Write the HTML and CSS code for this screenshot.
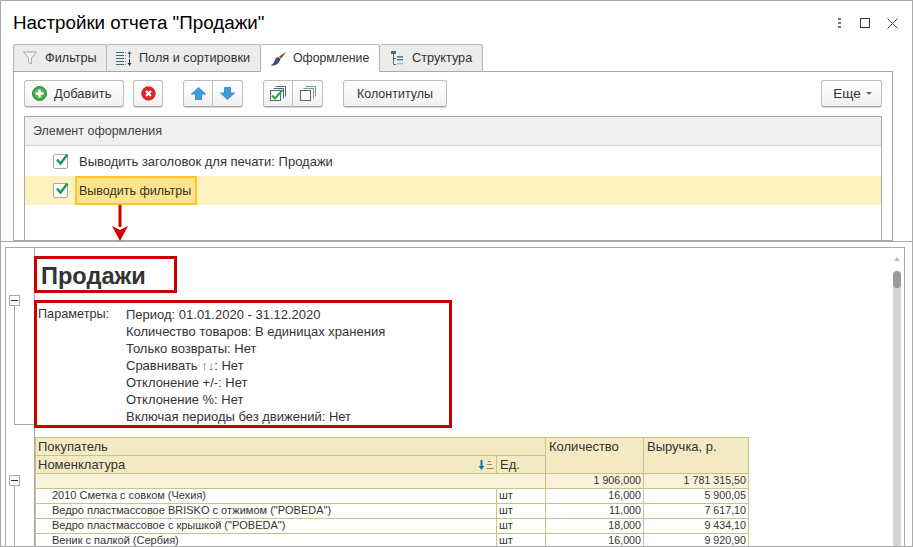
FILE: index.html
```html
<!DOCTYPE html>
<html lang="ru">
<head>
<meta charset="utf-8">
<title>Настройки отчета "Продажи"</title>
<link rel="stylesheet" href="styles.css">
</head>
<body>
<div class="page">
  <section class="settings">
    <header class="titlebar">
      <h1 class="title">Настройки отчета "Продажи"</h1>
      <div class="win-icons">
        <svg class="win-icon" width="6" height="12" viewBox="0 0 6 12"><g fill="#777"><rect x="1" y="1" width="3" height="2"/><rect x="1" y="5" width="3" height="2"/><rect x="1" y="9" width="3" height="2"/></g></svg>
        <svg class="win-icon" width="10" height="10" viewBox="0 0 10 10"><rect x=".5" y=".5" width="9" height="9" fill="none" stroke="#333"/></svg>
        <svg class="win-icon" width="11" height="11" viewBox="0 0 11 11"><path d="M.5.5l10 10M10.5.5l-10 10" stroke="#444" fill="none"/></svg>
      </div>
    </header>
    <nav class="tabs">
      <div class="tab tab-1">
        <svg width="14" height="14" viewBox="0 0 14 14"><path d="M.5 1h13L8.500 7v6l-3-1.500V7z" fill="#f4f4f4" stroke="#a8a8a8"/></svg>
        <span>Фильтры</span>
      </div>
      <div class="tab tab-2">
        <svg width="16" height="15" viewBox="0 0 16 15"><g fill="none" stroke-width="1"><path d="M0 1.500h8M0 4.500h8M0 7.500h8M0 10.500h8M0 13.500h8" stroke="#3e6a78"/><path d="M9 1.500h1M9 4.500h1M9 7.500h1M9 10.500h1M9 13.500h1" stroke="#7c9aa6"/><path d="M13.500 7V1" stroke="#2f6f8f"/><path d="M13.500 8v6" stroke="#333"/></g><path d="M11.500 3l2-3 2 3z" fill="#2f6f8f"/><path d="M11.500 12l2 3 2-3z" fill="#333"/></svg>
        <span>Поля и сортировки</span>
      </div>
      <div class="tab tab-3 tab-active">
        <svg width="17" height="15" viewBox="0 0 17 15"><path d="M16.500 .5L9 5.500l2 2.200z" fill="#7a5626"/><path d="M8.500 6C5.500 6.500 5 8.500 4.500 10.500 4 12 2.500 13 .5 14.500c4 .5 8-.5 10-6.500z" fill="#3c4a7e"/></svg>
        <span>Оформление</span>
      </div>
      <div class="tab tab-4">
        <svg width="14" height="15" viewBox="0 0 14 15"><path d="M3.500 2v11.500H6M3.500 7.500H6" stroke="#666" fill="none"/><rect x="1" y="0" width="5" height="3" fill="#666"/><path d="M7 5h6v1.500H7zM7 8h6v1.500H7z" fill="#3c87b4"/><path d="M7 12h6v1.500H7z" fill="#9bc0d6"/></svg>
        <span>Структура</span>
      </div>
    </nav>
    <div class="panel">
      <div class="toolbar">
        <button class="btn btn-add">
          <svg width="15" height="15" viewBox="0 0 15 15"><circle cx="7.500" cy="7.500" r="7" fill="#3fa64a" stroke="#2e8a3c"/><circle cx="7.500" cy="7.500" r="5" fill="#57b95f"/><path d="M7.500 3.500v8M3.500 7.500h8" stroke="#fff" stroke-width="2.400"/></svg>
          <span>Добавить</span>
        </button>
        <button class="btn btn-icon">
          <svg width="15" height="15" viewBox="0 0 15 15"><circle cx="7.500" cy="7.500" r="7.200" fill="#d8262c"/><path d="M5 5l5 5M10 5l-5 5" stroke="#fff" stroke-width="2.200"/></svg>
        </button>
        <div class="btn-group group-move">
          <button class="btn btn-icon">
            <svg width="15" height="13" viewBox="0 0 15 13"><path d="M7.500 .5L14.500 7H10.500v5.500h-6V7H.5z" fill="#3a9ee0" stroke="#2b7fb8" stroke-width=".8"/></svg>
          </button>
          <button class="btn btn-icon">
            <svg width="15" height="13" viewBox="0 0 15 13"><path d="M7.500 12.500L14.500 6H10.500V.5h-6V6H.5z" fill="#3a9ee0" stroke="#2b7fb8" stroke-width=".8"/></svg>
          </button>
        </div>
        <div class="btn-group group-check">
          <button class="btn btn-icon">
            <svg width="16" height="15" viewBox="0 0 16 15"><path d="M5.500 .5h10v10M3.500 2.500h10v10" fill="none" stroke="#4d6d78"/><rect x=".5" y="4.500" width="10" height="10" fill="#fff" stroke="#4d6d78"/><path d="M2 9.500l3 3 7.500-8.500" fill="none" stroke="#27a846" stroke-width="2"/></svg>
          </button>
          <button class="btn btn-icon">
            <svg width="16" height="15" viewBox="0 0 16 15"><path d="M5.500 .5h10v10M3.500 2.500h10v10" fill="none" stroke="#8098a2"/><rect x=".5" y="4.500" width="10" height="10" fill="#fff" stroke="#4d6d78"/></svg>
          </button>
        </div>
        <button class="btn btn-text">Колонтитулы</button>
        <button class="btn btn-more">Еще <i class="caret"></i></button>
      </div>
      <div class="grid">
        <div class="grid-head">Элемент оформления</div>
        <div class="grid-row">
          <span class="check"><svg width="16" height="16" viewBox="0 0 16 16"><path d="M3 6.500l3.500 4L13.500 1.500" fill="none" stroke="#159a55" stroke-width="2.400"/></svg></span>
          <span class="grid-text">Выводить заголовок для печати: Продажи</span>
        </div>
        <div class="grid-row grid-row-sel">
          <span class="check"><svg width="16" height="16" viewBox="0 0 16 16"><path d="M3 6.500l3.500 4L13.500 1.500" fill="none" stroke="#159a55" stroke-width="2.400"/></svg></span>
          <span class="grid-cell-sel">Выводить фильтры</span>
        </div>
      </div>
    </div>
  </section>

  <section class="report">
    <div class="report-inner">
      <div class="gutter">
        <span class="fold fold-1"></span>
        <span class="fold-line-end"></span>
        <span class="fold fold-2"></span>
        <span class="fold-line"></span>
      </div>
      <div class="sheet">
        <div class="mark mark-title"><h2 class="report-title">Продажи</h2></div>
        <div class="mark mark-params">
          <div class="params-label">Параметры:</div>
          <div class="params-list">
            <div>Период: 01.01.2020 - 31.12.2020</div>
            <div>Количество товаров: В единицах хранения</div>
            <div>Только возвраты: Нет</div>
            <div>Сравнивать <span class="updown">↑↓</span>: Нет</div>
            <div>Отклонение +/-: Нет</div>
            <div>Отклонение %: Нет</div>
            <div>Включая периоды без движений: Нет</div>
          </div>
        </div>
        <table class="data">
          <colgroup><col class="c-name"><col class="c-unit"><col class="c-qty"><col class="c-rev"></colgroup>
          <thead>
            <tr class="h1"><th colspan="2" class="th-first">Покупатель</th><th rowspan="2">Количество</th><th rowspan="2">Выручка, р.</th></tr>
            <tr class="h2">
              <th class="th-first"><div class="th-sort"><span>Номенклатура</span><svg width="16" height="10" viewBox="0 0 16 10"><path d="M3.500 0v7" stroke="#1a6fb0" stroke-width="2"/><path d="M.5 6h6l-3 4z" fill="#1a6fb0"/><path d="M10 1.500h3M9 4.500h5M8.500 8.500h7" stroke="#8a8a7a"/></svg></div></th>
              <th>Ед.</th>
            </tr>
          </thead>
          <tbody>
            <tr class="total"><td colspan="2"></td><td class="num">1 906,000</td><td class="num">1 781 315,50</td></tr>
            <tr><td class="name">2010 Сметка с совком (Чехия)</td><td>шт</td><td class="num">16,000</td><td class="num">5 900,05</td></tr>
            <tr><td class="name">Ведро пластмассовое BRISKO с отжимом ("POBEDA")</td><td>шт</td><td class="num">11,000</td><td class="num">7 617,10</td></tr>
            <tr><td class="name">Ведро пластмассовое с крышкой ("POBEDA")</td><td>шт</td><td class="num">18,000</td><td class="num">9 434,10</td></tr>
            <tr><td class="name">Веник с палкой (Сербия)</td><td>шт</td><td class="num">16,000</td><td class="num">9 920,90</td></tr>
          </tbody>
        </table>
      </div>
      <div class="scrollbar">
        <i class="scroll-up"></i>
        <div class="scroll-track"><div class="scroll-thumb"></div></div>
      </div>
    </div>
  </section>

  <svg class="arrow" width="16" height="36" viewBox="0 0 16 36"><path d="M8 0v22" stroke="#c80000" stroke-width="3"/><path d="M0 21l8 4 8-4-8 15z" fill="#c80000"/></svg>
</div>
</body>
</html>
```
FILE: styles.css
```css
* { box-sizing: border-box; }
html, body { margin: 0; padding: 0; background: #fff; }
body { font-family: "Liberation Sans", Arial, sans-serif; font-size: 13px; color: #333; }

.page {
  position: relative;
  width: 913px;
  height: 547px;
  border: 1px solid #a9a9a9;
  display: flex;
  flex-direction: column;
  overflow: hidden;
  background: #fff;
}

/* settings window */
.settings { height: 240px; flex: none; overflow: hidden; padding-left: 12px; }
.titlebar { height: 43px; display: flex; align-items: center; justify-content: space-between; padding-top: 1px; padding-right: 14px; }
.title { margin: 0; font-size: 18.8px; font-weight: 400; color: #000; }
.win-icons { display: flex; align-items: center; gap: 17px; }
.win-icon { display: block; }

.tabs { display: flex; height: 27px; font-size: 12.7px; }
.tab {
  display: flex; align-items: center;
  height: 28px;
  background: #ececec;
  border: 1px solid #b4b4b4;
  border-bottom: 1px solid #a9a9a9;
  border-left-width: 0;
  border-radius: 3px 3px 0 0;
  color: #333;
  white-space: nowrap;
  position: relative;
}
.tab-1 { width: 94px; padding-left: 9px; gap: 8px; border-left-width: 1px; }
.tab-2 { width: 154px; padding-left: 9px; gap: 7px; }
.tab-3 { width: 119px; padding-left: 9px; gap: 6px; font-size: 12.3px; }
.tab-4 { width: 103px; padding-left: 10px; gap: 8px; }
.tab-active { background: #fff; border-bottom-color: #fff; z-index: 1; }

.panel {
  width: 880px;
  height: 170px;
  border: 1px solid #a9a9a9;
  padding: 8px 10px 0 10px;
}
.toolbar { display: flex; align-items: center; height: 27px; }
.btn {
  height: 27px;
  padding: 0;
  font: 13px "Liberation Sans", Arial, sans-serif;
  color: #333;
  background: linear-gradient(#fff, #f1f1f1);
  border: 1px solid #bdbdbd;
  border-bottom-color: #a6a6a6;
  border-radius: 3px;
  box-shadow: 0 1px 0 #d8d8d8;
  display: flex; align-items: center; justify-content: center;
}
.btn-add { width: 100px; gap: 7px; justify-content: flex-start; padding-left: 7px; }
.btn-icon { width: 30px; margin-left: 9px; }
.btn-group { display: flex; }
.btn-group .btn { margin-left: 0; border-radius: 0; }
.btn-group .btn:first-child { border-radius: 3px 0 0 3px; }
.btn-group .btn:last-child { border-radius: 0 3px 3px 0; border-left: 0; }
.group-move { margin-left: 20px; }
.group-check { margin-left: 20px; }
.btn-text { width: 104px; margin-left: 20px; font-size: 12.5px; }
.btn-more { width: 61px; margin-left: auto; gap: 5px; font-size: 13.5px; padding-left: 2px; }
.caret { width: 0; height: 0; border: 3px solid transparent; border-top-color: #666; border-bottom: 0; }

.grid { margin-top: 9px; width: 858px; height: 140px; border: 1px solid #a9a9a9; }
.grid-head { height: 29px; background: #f0f0f0; border-bottom: 1px solid #d4d4d4; padding-left: 8px; display: flex; align-items: center; color: #444; font-size: 12.5px; }
.grid-row { height: 30px; display: flex; align-items: center; padding-left: 28px; }
.grid-row-sel { height: 29px; background: #fdf1c0; }
.check {
  width: 15px; height: 15px;
  border: 1px solid #a9a9a9; border-radius: 2px;
  background: #fff;
  flex: none;
  display: block;
}
.check svg { display: block; margin: -2px 0 0 0; }
.grid-text { margin-left: 11px; }
.grid-cell-sel {
  margin-left: 7px;
  height: 29px; width: 122px;
  background: #fde38c;
  border: 2px solid #fcc52b;
  padding-left: 2px;
  display: flex; align-items: center;
  white-space: nowrap;
  font-size: 12.5px;
}

/* report window */
.report {
  flex: 1;
  min-height: 0;
  border-top: 1px solid #a9a9a9;
  padding: 5px 7px 0 4px;
  background: #fff;
}
.report-inner {
  height: 100%;
  border-top: 1px solid #a9a9a9;
  border-left: 1px solid #a9a9a9;
  border-right: 1px solid #a9a9a9;
  display: flex;
  overflow: hidden;
}
.gutter {
  width: 29px; flex: none;
  border-right: 1px solid #a9a9a9;
  display: flex; flex-direction: column;
  padding-left: 3px;
}
.fold {
  display: block; flex: none;
  width: 11px; height: 11px;
  border: 1px solid #a9a9a9;
  background: linear-gradient(#333, #333) center / 7px 1px no-repeat #fff;
}
.fold-1 { margin-top: 47px; }
.fold-line-end {
  display: block; flex: none;
  width: 20px; height: 119px;
  margin-left: 5px;
  border-left: 1px solid #a9a9a9;
  border-bottom: 1px solid #a9a9a9;
}
.fold-2 { margin-top: 50px; }
.fold-line { display: block; flex: 1; margin-left: 5px; border-left: 1px solid #a9a9a9; }

.sheet { flex: 1; min-width: 0; }
.mark { border: 3px solid #c80000; margin-left: -1px; background: #fff; position: relative; }
.mark-title { width: 143px; height: 37px; margin-top: 8px; display: flex; align-items: center; padding: 4px 0 0 4px; }
.report-title { margin: 0; font-size: 23.6px; font-weight: 700; color: #333; }
.mark-params { width: 418px; height: 128px; margin-top: 7px; display: flex; padding: 3px 0 0 1px; line-height: 17px; }
.params-label { width: 88px; flex: none; font-size: 12.7px; }
.updown { color: #5a6f96; }

.data {
  margin-top: 9px;
  width: 713px;
  table-layout: fixed;
  border-collapse: collapse;
  font-size: 11px;
}
.c-name { width: 461px; }
.c-unit { width: 49px; }
.c-qty { width: 98px; }
.c-rev { width: 105px; }
.data th, .data td {
  border: 1px solid #cfc083;
  padding: 0 2px;
  overflow: hidden;
  white-space: nowrap;
}
.data th { background: #f3eac4; font-weight: 400; font-size: 13px; text-align: left; vertical-align: top; line-height: 17px; padding-left: 3px; }
.data .th-first { padding-left: 2px; }
.data .h1 { height: 17px; }
.data .h2 { height: 18px; }
.th-sort { display: flex; justify-content: space-between; align-items: center; }
.data td { height: 15px; line-height: 13px; padding-bottom: 1px; }
.data .total td { background: #f8f2da; }
.data .name { padding-left: 16px; }
.data .num { text-align: right; font-size: 10.7px; }

.scrollbar { width: 8px; flex: none; margin-right: 3px; display: flex; flex-direction: column; align-items: center; }
.scroll-up { display: block; flex: none; width: 0; height: 0; margin-top: 9px; border: 3px solid transparent; border-bottom: 4px solid #b8b8b8; border-top: 0; }
.scroll-track { flex: 1; width: 8px; margin-top: 10px; background: #d5d5d5; border-radius: 4px 4px 0 0; }
.scroll-thumb { height: 17px; background: #9a9a9a; border-radius: 4px; }

.arrow { position: absolute; left: 111px; top: 204px; }
```
